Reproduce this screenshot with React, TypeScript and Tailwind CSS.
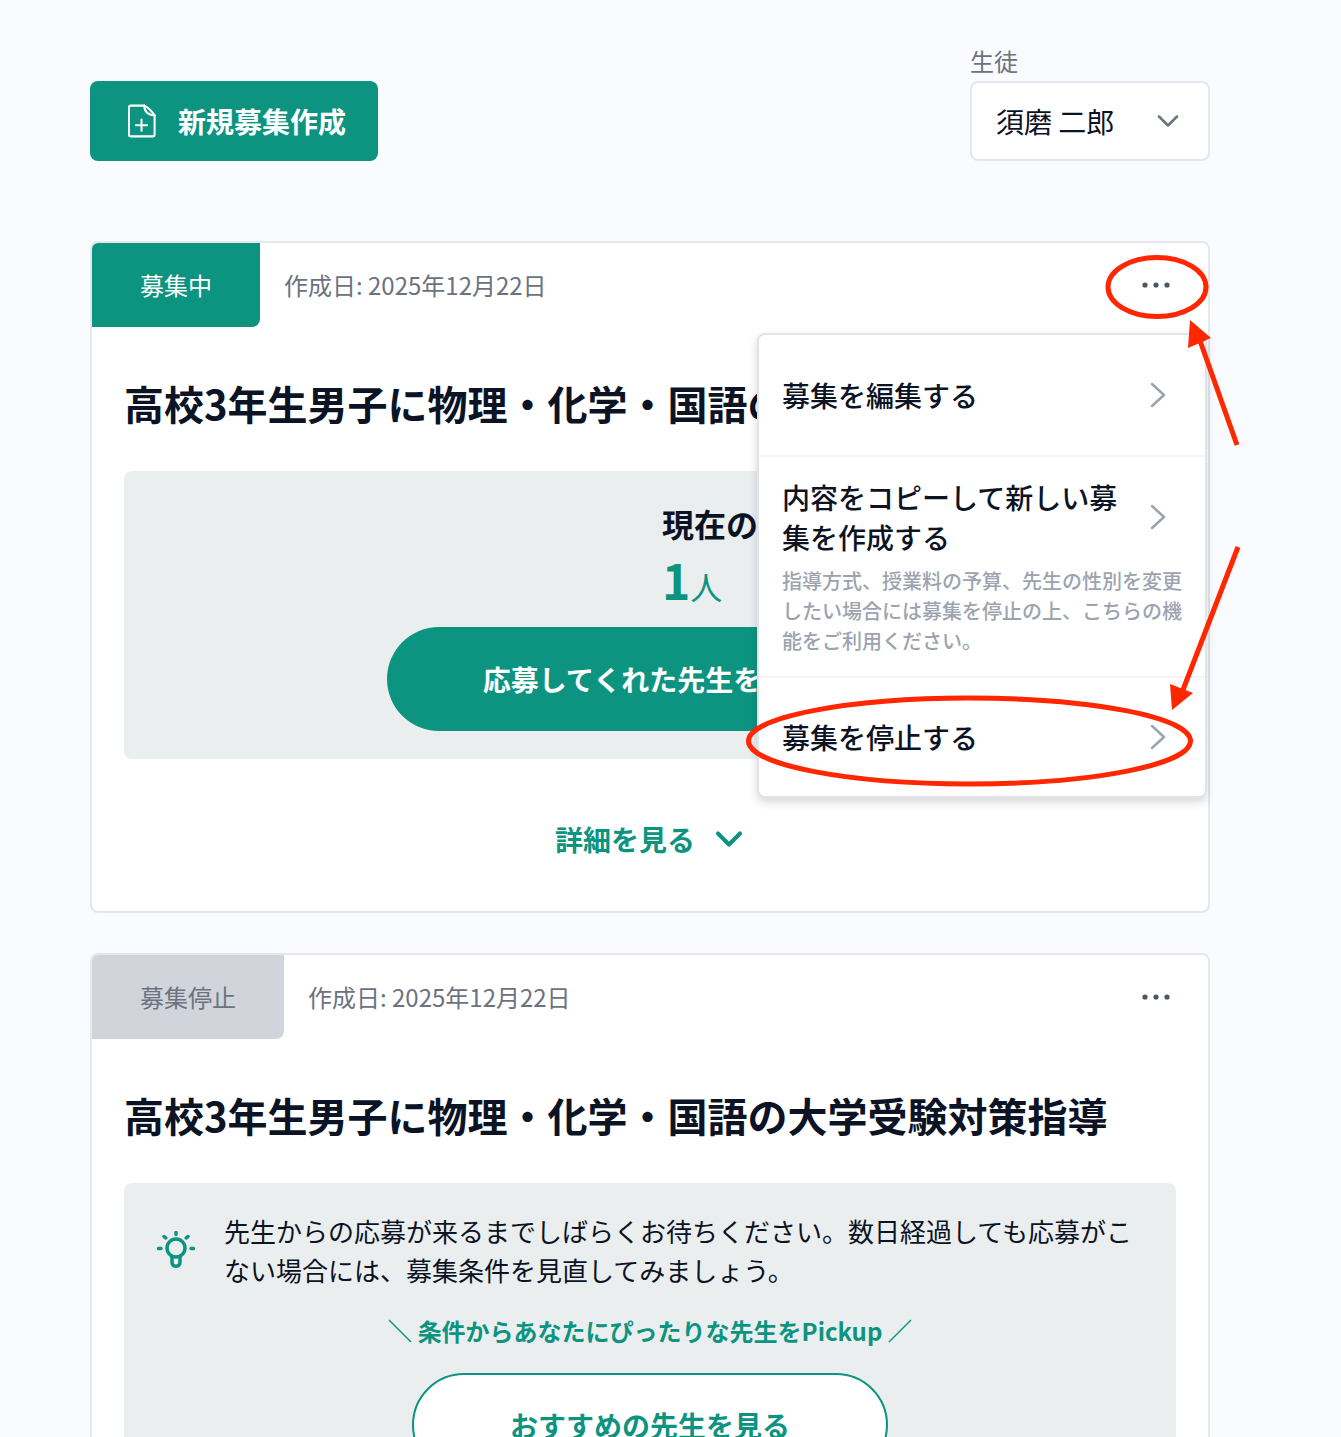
import { ChevronDown } from 'lucide-react';

function FilePlusIcon() {
    return (
        <svg width="28" height="36" viewBox="0 0 30 36" fill="none" stroke="white" strokeWidth="2.200" strokeLinejoin="round" strokeLinecap="round" className="shrink-0">
            <path d="M3 1.5h14.5c0 5 2 10 11 10.500v20.500c0 1-.8 2-2 2H3c-1 0-2-1-2-2V3.500c0-1 1-2 2-2z" />
            <path d="M17.500 1.500c4 2 8 6 11 10.500" />
            <path d="M14.500 16.500v12M8.500 22.500h12" />
        </svg>
    );
}

function BulbIcon() {
    return (
        <svg width="38" height="38" viewBox="0 0 38 38" fill="none" stroke="#0d9480" strokeLinecap="round" className="shrink-0">
            <circle cx="19" cy="17" r="9" strokeWidth="3.500" />
            <path d="M15 25.500v6c0 5 8 5 8 0v-6" strokeWidth="3.500" strokeLinejoin="round" />
            <path d="M19 1.500v2M7 5.500l1.800 1.500M31 5.500L29.200 7M1.500 17.500h2.500M34 17.500h2.500" strokeWidth="3.500" />
        </svg>
    );
}

function Dots() {
    return (
        <svg width="28" height="6" viewBox="0 0 28 6" fill="#4b5563" className="mr-[38px] ml-auto">
            <circle cx="3" cy="3" r="2.600" />
            <circle cx="14" cy="3" r="2.600" />
            <circle cx="25" cy="3" r="2.600" />
        </svg>
    );
}

function CardHeader({ label, badgeClass }: { label: string; badgeClass: string }) {
    return (
        <div className="flex h-[84px] items-center">
            <div className={`flex h-full items-center justify-center rounded-tl-[6px] rounded-br-lg text-[24px] ${badgeClass}`}>
                {label}
            </div>
            <p className="ml-[24px] text-[24px] text-[#6b7280]">作成日: 2025年12月22日</p>
            <Dots />
        </div>
    );
}

function Title() {
    return (
        <h2 className="px-[32px] pt-[46px] pb-[38px] text-[40px] leading-[60px] font-bold whitespace-nowrap text-[#0b1324]">
            高校3年生男子に物理・化学・国語の大学受験対策指導
        </h2>
    );
}

function MenuChevron() {
    return (
        <svg width="16" height="26" viewBox="0 0 16 26" fill="none" stroke="#9ca3af" strokeWidth="2.500" strokeLinecap="round" strokeLinejoin="round" className="shrink-0">
            <path d="M2 2L14 13L2 24" />
        </svg>
    );
}

function Menu() {
    return (
        <div className="absolute top-[90px] left-[665px] z-10 w-[450px] rounded-lg border-2 border-[#e1e3e8] bg-white shadow-[0_4px_10px_rgba(0,0,0,0.16)]">
            <div className="flex h-[120px] items-center justify-between pr-[39px] pl-[23px] text-[28px] font-medium">
                募集を編集する
                <MenuChevron />
            </div>
            <div className="border-t-2 border-[#f3f4f6] pt-[20px] pr-[22px] pb-[20px] pl-[23px]">
                <div className="flex items-center justify-between pr-[17px]">
                    <p className="w-[340px] text-[28px] leading-[40px] font-medium">
                        内容をコピーして新しい募集を作成する
                    </p>
                    <MenuChevron />
                </div>
                <p className="mt-[9px] text-[20px] leading-[30px] font-medium text-[#9ca3af]">
                    指導方式、授業料の予算、先生の性別を変更したい場合には募集を停止の上、こちらの機能をご利用ください。
                </p>
            </div>
            <div className="flex h-[120px] items-center justify-between border-t-2 border-[#f3f4f6] pr-[39px] pl-[23px] text-[28px] font-medium">
                募集を停止する
                <MenuChevron />
            </div>
        </div>
    );
}

function Annotations() {
    return (
        <svg className="absolute inset-0 z-20" width="1341" height="1437" viewBox="0 0 1341 1437" fill="none">
            <ellipse cx="1157" cy="287" rx="49" ry="29.500" stroke="#ff2600" strokeWidth="5" />
            <ellipse cx="969.500" cy="741" rx="221" ry="43" stroke="#ff2600" strokeWidth="5" />
            <path d="M1237 445L1198 335" stroke="#ff2600" strokeWidth="5" />
            <path d="M1190 320L1188 348L1211 338Z" fill="#ff2600" />
            <path d="M1238 547L1181 695" stroke="#ff2600" strokeWidth="5" />
            <path d="M1172 710L1170 684L1193 693Z" fill="#ff2600" />
        </svg>
    );
}

export default function App() {
    return (
        <div
            className="relative h-[1437px] overflow-hidden bg-[#f9fbff] pt-[48px] pr-[131px] pl-[90px] text-[#0b1324]"
            style={{ fontFamily: '"Noto Sans CJK JP", "Noto Sans", sans-serif' }}
        >
            <div className="flex items-end justify-between">
                <button className="flex h-[80px] w-[288px] items-center rounded-lg bg-[#0d9480] pl-[38px] text-[28px] font-bold text-white">
                    <FilePlusIcon />
                    <span className="ml-[22px]">新規募集作成</span>
                </button>
                <div className="w-[240px]">
                    <p className="h-[33px] text-[24px] leading-[26px] text-[#6b7280]">生徒</p>
                    <div className="flex h-[80px] items-center justify-between rounded-lg border-2 border-[#e2e8f0] bg-white pr-[22px] pl-[24px] text-[28px]">
                        須磨 二郎
                        <ChevronDown className="size-[36px] text-[#6b7280]" strokeWidth={1.700} />
                    </div>
                </div>
            </div>

            <div className="relative mt-[80px] rounded-lg border-2 border-[#e5e7eb] bg-white">
                <CardHeader label="募集中" badgeClass="w-[168px] bg-[#0d9480] text-white" />
                <Title />
                <div className="mx-[32px] h-[288px] rounded-lg bg-[#ebeeef] pt-[28px]">
                    <div className="pl-[538px]">
                        <p className="text-[32px] leading-[48px] font-bold whitespace-nowrap">現在の応募</p>
                        <p className="mt-[1px] h-[64px] leading-[62px] font-bold whitespace-nowrap text-[#0d9480]">
                            <span className="text-[48px]">1</span>
                            <span className="text-[32px] font-normal">人</span>
                        </p>
                    </div>
                    <div className="mx-auto mt-[15px] flex h-[104px] w-[526px] items-center justify-center rounded-full bg-[#0d9480] text-[28px] font-bold text-white">
                        応募してくれた先生を見る
                    </div>
                </div>
                <div className="flex items-center justify-center gap-[12px] pt-[59px] pb-[51px] pl-[6px] text-[28px] leading-[42px] font-bold text-[#0d9480]">
                    詳細を見る
                    <ChevronDown className="-my-[1px] size-[44px]" strokeWidth={2.200} />
                </div>
                <Menu />
            </div>

            <div className="mt-[40px] rounded-lg border-2 border-[#e5e7eb] bg-white">
                <CardHeader label="募集停止" badgeClass="w-[192px] bg-[#d1d5db] text-[#6b7280]" />
                <Title />
                <div className="mx-[32px] rounded-lg bg-[#ebeeef] pt-[28px] pb-[40px]">
                    <div className="flex items-center pr-[32px] pl-[33px]">
                        <BulbIcon />
                        <p className="ml-[29px] text-[26px] leading-[39px]">
                            先生からの応募が来るまでしばらくお待ちください。数日経過しても応募がこない場合には、募集条件を見直してみましょう。
                        </p>
                    </div>
                    <div className="mt-[24px] flex items-center justify-center gap-[6px] text-[24px] leading-[36px] font-bold text-[#0d9480]">
                        <svg width="24" height="24" viewBox="0 0 24 24" stroke="#0d9480" strokeWidth="1.500">
                            <path d="M1 1L23 23" />
                        </svg>
                        条件からあなたにぴったりな先生をPickup
                        <svg width="24" height="24" viewBox="0 0 24 24" stroke="#0d9480" strokeWidth="1.500">
                            <path d="M23 1L1 23" />
                        </svg>
                    </div>
                    <div className="mx-auto mt-[24px] flex h-[104px] w-[476px] items-center justify-center rounded-full border-2 border-[#0d9480] bg-white text-[28px] font-bold text-[#0d9480]">
                        おすすめの先生を見る
                    </div>
                </div>
            </div>
            <Annotations />
        </div>
    );
}
